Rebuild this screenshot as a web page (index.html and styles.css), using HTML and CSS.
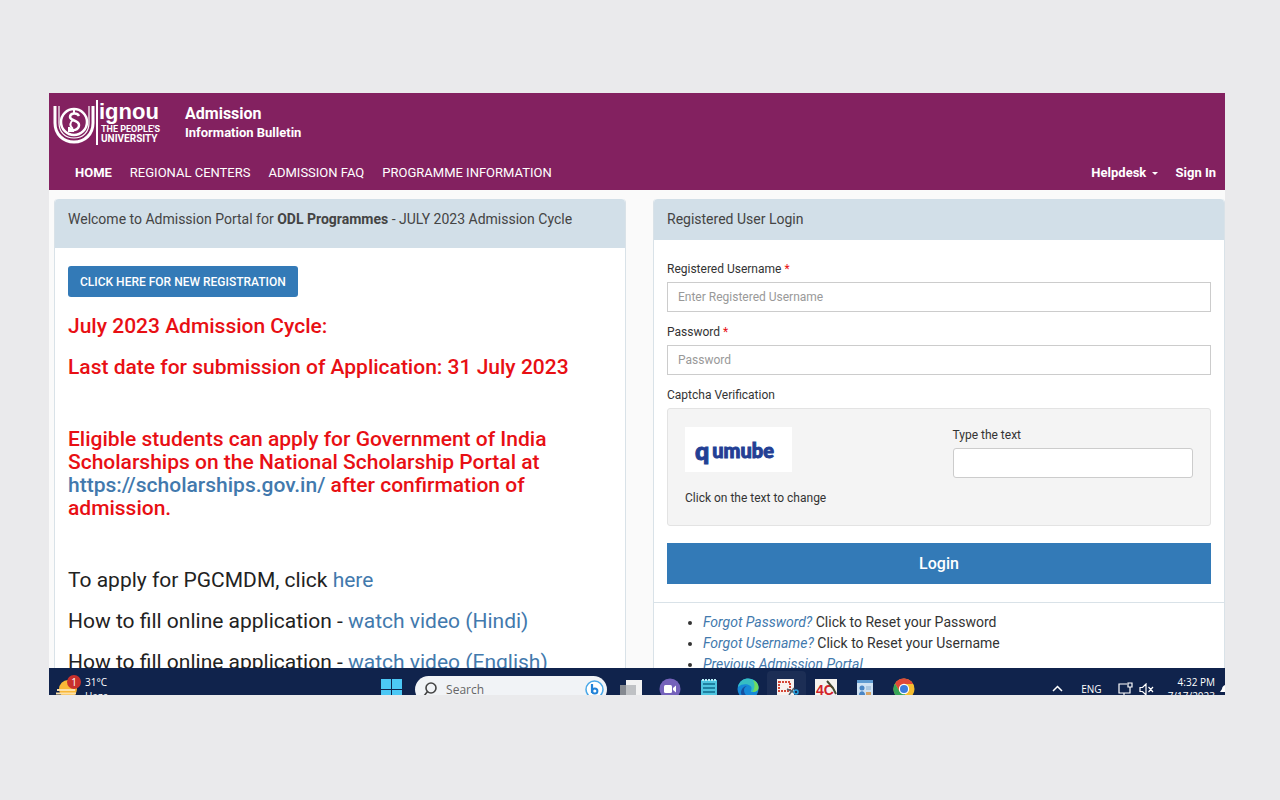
FILE: index.html
```html
<!DOCTYPE html>
<html lang="en">
<head>
  <meta charset="UTF-8">
  <meta name="viewport" content="width=device-width, initial-scale=1.0">
  <title>IGNOU Admission Portal</title>
  <link rel="stylesheet" href="styles.css">
</head>
<body>
  <div class="screen">
    <header class="site-header">
      <div class="brand">
        <a class="logo" href="#">
          <svg class="logo-mark" viewBox="0 0 46 46" fill="none" stroke="#fff" aria-hidden="true">
            <path d="M2 6v17c0 11 8 19 19 19s19-8 19-19V6" stroke-width="3"/>
            <path d="M6 6v17c0 9 6 15 15 15s15-6 15-15V6" stroke-width="1.200"/>
            <circle cx="21" cy="22" r="13" stroke-width="2.500"/>
            <path d="M26 16c-2-4-9-3-9 1s9 3 9 8-7 7-10 3" stroke-width="2.500"/>
            <path d="M21 8v5M20 20c-3 2-4 6 0 9M16 27v4h5" stroke-width="2"/>
            <path d="M44 0v45" stroke-width="2"/>
          </svg>
          <span class="logo-text">
            <span class="logo-name">ignou</span>
            <span class="logo-tag">THE PEOPLE'S</span>
            <span class="logo-sub">UNIVERSITY</span>
          </span>
        </a>
        <div class="site-title">
          <div class="title-main">Admission</div>
          <div class="title-sub">Information Bulletin</div>
        </div>
      </div>
      <nav class="navbar">
        <a class="active" href="#">HOME</a>
        <a href="#">REGIONAL CENTERS</a>
        <a href="#">ADMISSION FAQ</a>
        <a href="#">PROGRAMME INFORMATION</a>
        <a class="nav-right" href="#">Helpdesk <span class="caret"></span></a>
        <a class="active" href="#">Sign In</a>
      </nav>
    </header>

    <main class="content">
      <section class="panel">
        <div class="panel-heading heading-tall">Welcome to Admission Portal for <b>ODL Programmes</b> - JULY 2023 Admission Cycle</div>
        <div class="panel-body notices">
          <button class="btn-register" type="button">CLICK HERE FOR NEW REGISTRATION</button>
          <p class="alert">July 2023 Admission Cycle:</p>
          <p class="alert">Last date for submission of Application: 31 July 2023</p>
          <p class="alert spaced">Eligible students can apply for Government of India Scholarships on the National Scholarship Portal at <a href="#">https://scholarships.gov.in/</a> after confirmation of admission.</p>
          <p class="spaced">To apply for PGCMDM, click <a href="#">here</a></p>
          <p>How to fill online application - <a href="#">watch video (Hindi)</a></p>
          <p>How to fill online application - <a href="#">watch video (English)</a></p>
        </div>
      </section>

      <section class="panel">
        <div class="panel-heading">Registered User Login</div>
        <form class="login-form">
          <label for="username">Registered Username <span class="required">*</span></label>
          <input id="username" type="text" placeholder="Enter Registered Username">
          <label for="password">Password <span class="required">*</span></label>
          <input id="password" type="password" placeholder="Password">
          <div class="captcha-title">Captcha Verification</div>
          <div class="captcha">
            <div class="captcha-left">
              <button class="captcha-image" type="button"><span class="captcha-q">q</span><span>umube</span></button>
              <div>Click on the text to change</div>
            </div>
            <div class="captcha-right">
              <label for="captcha">Type the text</label>
              <input id="captcha" type="text">
            </div>
          </div>
          <button class="btn-login" type="button">Login</button>
        </form>
        <ul class="help-links">
          <li><a href="#">Forgot Password?</a> Click to Reset your Password</li>
          <li><a href="#">Forgot Username?</a> Click to Reset your Username</li>
          <li><a href="#">Previous Admission Portal</a></li>
        </ul>
      </section>
    </main>

    <!-- Taskbar -->
    <footer class="taskbar">
      <div class="taskbar-inner">
        <div class="weather">
          <svg width="26" height="28" viewBox="0 0 26 28" aria-hidden="true">
            <circle cx="12" cy="14" r="9" fill="#f8b737"/>
            <path d="M1 15h18M0 18.500h20M0 22h20" stroke="#fbe0a8" stroke-width="2"/>
            <circle cx="18" cy="7" r="7" fill="#c9302c"/>
            <text x="18" y="11" class="badge-text">1</text>
          </svg>
          <div class="tray-text">31°C<br>Haze</div>
        </div>

        <div class="apps">
          <svg class="start" width="21" height="21" viewBox="0 0 21 21" aria-hidden="true">
            <path fill="#4cc8f5" d="M0 0h10v10H0zM11 0h10v10H11zM0 11h10v10H0zM11 11h10v10H11z"/>
          </svg>
          <div class="search">
            <svg width="15" height="15" viewBox="0 0 15 15" fill="none" stroke="#444" stroke-width="1.600" aria-hidden="true">
              <circle cx="8" cy="6" r="5"/><path d="M4.500 9.500L1 14"/>
            </svg>
            <input type="text" placeholder="Search" aria-label="Search">
            <svg width="19" height="19" viewBox="0 0 19 19" fill="none" aria-hidden="true">
              <circle cx="9.500" cy="9.500" r="8.500" fill="#fff" stroke="#4aa8e8" stroke-width="1.500"/>
              <path d="M7 4v9" stroke="#2383d8" stroke-width="2.200"/>
              <circle cx="9.800" cy="11" r="2.600" stroke="#2383d8" stroke-width="2"/>
            </svg>
          </div>
          <span class="app">
            <svg width="22" height="22" viewBox="0 0 22 22"><path fill="#f2f2f2" d="M6 2h16v15H6z"/><path fill="#858990" d="M0 7h16v13H0z"/><path fill="#bfc1c4" d="M6 7h10v10H6z"/></svg>
          </span>
          <span class="app">
            <svg width="22" height="22" viewBox="0 0 22 22"><circle cx="11" cy="11" r="10.500" fill="#7562bb"/><rect x="5" y="7" width="8" height="8" rx="1.500" fill="#fff"/><path fill="#fff" d="M14 10l3-2.500v7L14 12z"/></svg>
          </span>
          <span class="app">
            <svg width="22" height="22" viewBox="0 0 22 22"><path fill="#4fc5e0" d="M3 2h16v19H3z"/><path d="M5 6h12M5 10h12M5 14h12M5 18h12" stroke="#116b8c" stroke-width="1.500"/><path d="M4 2h14" stroke="#b7edf6" stroke-width="2" stroke-dasharray="2 1"/></svg>
          </span>
          <span class="app">
            <svg width="22" height="22" viewBox="0 0 22 22"><circle cx="11" cy="11" r="10.500" fill="#1689d8"/><path fill="#36bdc3" d="M1 9C2 3 7 .5 11 .5c6 0 10.500 4 10.500 8.500 0 4-3 5-6 5-3 0-1-1-1-4C14.500 7 7 4 1 9z"/><path fill="#70dc5e" d="M16 2c4 2 5.500 5 5.500 7.500 0 3.500-3 4.500-6 4.500 2-3 3-7 .5-12z"/><path fill="#174f9e" d="M7 12c0 5 5 9 10 7-4 4-12 2-13-4 0-4 3-7 6-7-2 1-3 2-3 4z"/></svg>
          </span>
          <span class="app app-open">
            <svg width="24" height="22" viewBox="0 0 24 22"><path fill="#f8f2ef" d="M2 1h17v19H2z"/><path d="M4 4h11v9H4z" fill="none" stroke="#d54837" stroke-width="2" stroke-dasharray="2 1"/><path d="M12 11l8 4M14 17l5-7" stroke="#59636c" stroke-width="1.500"/><circle cx="21" cy="14" r="2" fill="none" stroke="#28a4e2" stroke-width="1.500"/></svg>
          </span>
          <span class="app">
            <svg width="22" height="22" viewBox="0 0 22 22"><path fill="#f6f3ef" d="M0 1h22v20H0z"/><text x="1" y="17" class="app-4c">4C</text><path d="M12 3l6 7 3 6" fill="none" stroke="#454c32" stroke-width="2"/></svg>
          </span>
          <span class="app">
            <svg width="22" height="22" viewBox="0 0 22 22"><path fill="#cfe2f3" d="M3 2h16v19H3z"/><path fill="#5f9bd1" d="M3 2h16v3H3z"/><circle cx="8" cy="10" r="2.500" fill="#4a86c5"/><path fill="#4a86c5" d="M5 17c0-5 6-5 6 0z"/><path fill="#d6a467" d="M12 14h5v3h-5z"/><path d="M12 9h5M12 11h5" stroke="#88aed0"/></svg>
          </span>
          <span class="app">
            <svg width="22" height="22" viewBox="0 0 22 22"><circle cx="11" cy="11" r="10.500" fill="#f5bd2f"/><path fill="#df4938" d="M2 5.500a10.500 10.500 0 0 1 18.200.500H11L6.500 13.500z"/><path fill="#37a658" d="M2 5.500L6.500 13.500l6 2L10 21.500A10.500 10.500 0 0 1 2 5.500z"/><circle cx="11" cy="11" r="5.200" fill="#fff"/><circle cx="11" cy="11" r="4" fill="#3c7ddd"/></svg>
          </span>
        </div>

        <div class="tray">
          <svg width="11" height="8" viewBox="0 0 11 8" fill="none" stroke="#fff" stroke-width="1.500"><path d="M1 6l4.500-4.500L10 6"/></svg>
          <span class="language">ENG</span>
          <svg width="16" height="15" viewBox="0 0 16 15" fill="none" stroke="#fff" stroke-width="1.200"><path d="M9 2H1v9h11V7M4 14h6M6 11v3M10 1h4v4h-4zM12 5v5"/></svg>
          <svg class="volume" width="15" height="13" viewBox="0 0 15 13" fill="none" stroke="#fff" stroke-width="1.200"><path d="M1 4.500h2.500L7 1v11L3.500 8.500H1zM9.500 4l4.500 5M14 4L9.500 9"/></svg>
          <div class="tray-text clock">4:32 PM<br>7/17/2023</div>
          <svg width="6" height="10" viewBox="0 0 6 10"><path fill="#fff" d="M6 1v7H1l2-3c0-2 1-3 3-4z"/></svg>
        </div>
      </div>
    </footer>
  </div>
</body>
</html>
```
FILE: styles.css
```css
* {
  box-sizing: border-box;
}
body {
  margin: 0;
  padding: 93px 55px 105px 49px;
  height: 100vh;
  background-color: #eaeaec;
  font-family: Roboto, "Liberation Sans", sans-serif;
  font-size: 14px;
  color: #333;
}
a {
  color: #4279ad;
  text-decoration: none;
}
button,
input {
  font-family: inherit;
}
.screen {
  display: flex;
  flex-direction: column;
  height: 100%;
  overflow: hidden;
  background-color: #fafafa;
}

/* Header */
.site-header {
  flex: none;
  background-color: #832160;
  color: #fff;
}
.brand {
  display: flex;
  gap: 25px;
  height: 62px;
  padding: 7px 4px;
}
.logo {
  display: flex;
  color: #fff;
}
.logo-mark {
  width: 46px;
  height: 46px;
}
.logo-text {
  display: flex;
  flex-direction: column;
  font-weight: 700;
  font-size: 10px;
  line-height: 10px;
}
.logo-name {
  font-family: "Liberation Sans", Arial, sans-serif;
  font-size: 22px;
  line-height: 24px;
}
.logo-tag,
.logo-sub {
  padding-left: 2px;
}
.logo-tag {
  font-size: 9px;
}
.site-title {
  padding-top: 4px;
  font-weight: 700;
  font-size: 13px;
  line-height: 19px;
}
.title-main {
  font-size: 16px;
}
.navbar {
  display: flex;
  gap: 18px;
  height: 35px;
  padding: 0 9px 0 26px;
  font-size: 13px;
  line-height: 35px;
}
.navbar a {
  color: #fff;
}
.navbar .active,
.navbar .nav-right {
  font-weight: 700;
}
.nav-right {
  margin-left: auto;
}
.caret {
  display: inline-block;
  margin-left: 2px;
  border-top: 3px solid #fff;
  border-left: 3px solid transparent;
  border-right: 3px solid transparent;
  vertical-align: middle;
}

/* Panels */
.content {
  flex: 1;
  min-height: 0;
  display: grid;
  grid-template-columns: 1fr 1fr;
  gap: 27px;
  padding: 9px 0 0 5px;
  overflow: hidden;
}
.panel {
  background-color: #fff;
  border: 1px solid #d9e2e8;
  border-top: none;
  border-radius: 4px 4px 0 0;
}
.panel-heading {
  height: 41px;
  padding: 10px 13px;
  background-color: #d2dfe8;
  border-radius: 4px 4px 0 0;
  line-height: 20px;
  color: #444;
}
.heading-tall {
  height: 49px;
}
.panel-body {
  padding: 18px 13px;
}
.btn-register {
  display: block;
  height: 31px;
  padding: 0 12px;
  border: none;
  border-radius: 3px;
  background-color: #337ab7;
  color: #fff;
  font-size: 12px;
  font-weight: 500;
}
.notices p {
  margin: 18px 0 0;
  font-size: 21px;
  line-height: 23px;
  color: #222;
}
.notices .alert {
  color: #e80f14;
  font-weight: 500;
}
.notices .spaced {
  margin-top: 49px;
}

/* Login form */
.login-form {
  padding: 21px 13px 18px;
  font-size: 12px;
  line-height: 17px;
  border-bottom: 1px solid #d9e2e8;
}
.login-form label,
.captcha-title {
  display: block;
  margin-bottom: 4px;
}
.required {
  color: #e80f14;
}
.login-form input {
  display: block;
  width: 100%;
  height: 30px;
  margin-bottom: 12px;
  padding: 0 10px;
  border: 1px solid #ccc;
  background-color: #fff;
  font-size: 12px;
}
.login-form input::placeholder {
  color: #999;
}
.captcha {
  display: grid;
  grid-template-columns: 1fr 1fr;
  gap: 27px;
  padding: 18px 17px;
  margin-bottom: 17px;
  border: 1px solid #e3e3e3;
  border-radius: 3px;
  background-color: #f4f4f4;
}
.captcha-image {
  display: flex;
  align-items: center;
  gap: 3px;
  width: 107px;
  height: 45px;
  margin-bottom: 18px;
  padding: 0 10px;
  border: none;
  background-color: #fff;
  color: #233f94;
  font-family: Lato, sans-serif;
  font-weight: 900;
  font-size: 20px;
  -webkit-text-stroke: 1px #233f94;
}
.captcha-q {
  font-size: 25px;
}
.captcha-right input {
  margin: 0;
  border-radius: 3px;
}
.btn-login {
  display: block;
  width: 100%;
  height: 41px;
  border: none;
  background-color: #337ab7;
  color: #fff;
  font-size: 16px;
  font-weight: 500;
}
.help-links {
  margin: 0;
  padding: 9px 13px 9px 49px;
  line-height: 21px;
}
.help-links a {
  font-style: italic;
}

/* Taskbar */
.taskbar {
  flex: none;
  height: 27px;
  overflow: hidden;
  background-color: #10234c;
  color: #fff;
  font-family: "Open Sans", sans-serif;
}
.taskbar-inner {
  display: grid;
  grid-template-columns: 11fr auto 10fr;
  align-items: center;
  height: 42px;
}
.weather,
.apps,
.tray,
.search {
  display: flex;
  align-items: center;
}
.weather {
  gap: 3px;
  padding-left: 7px;
}
.badge-text {
  fill: #fff;
  font-size: 10px;
  text-anchor: middle;
}
.tray-text {
  font-size: 10px;
  line-height: 14px;
}
.start {
  margin-right: 13px;
}
.search {
  width: 192px;
  height: 27px;
  margin-right: 4px;
  padding: 0 3px 0 8px;
  gap: 8px;
  border-radius: 14px;
  background-color: #f1f3f6;
}
.search input {
  flex: 1;
  min-width: 0;
  padding: 0;
  border: none;
  background: none;
  font-size: 12px;
}
.search input::placeholder {
  color: #666;
}
.app {
  display: flex;
  align-items: center;
  justify-content: center;
  width: 39px;
  height: 36px;
}
.app-open {
  border-radius: 4px;
  background-color: #1c2e55;
}
.app-4c {
  fill: #d2232a;
  font-family: "Liberation Sans", sans-serif;
  font-size: 14px;
  font-weight: 700;
}
.tray {
  justify-content: flex-end;
}
.language {
  margin: 0 16px 0 18px;
  font-size: 10px;
}
.volume {
  margin-left: 5px;
}
.clock {
  margin: 0 4px 0 14px;
  text-align: right;
}
```
